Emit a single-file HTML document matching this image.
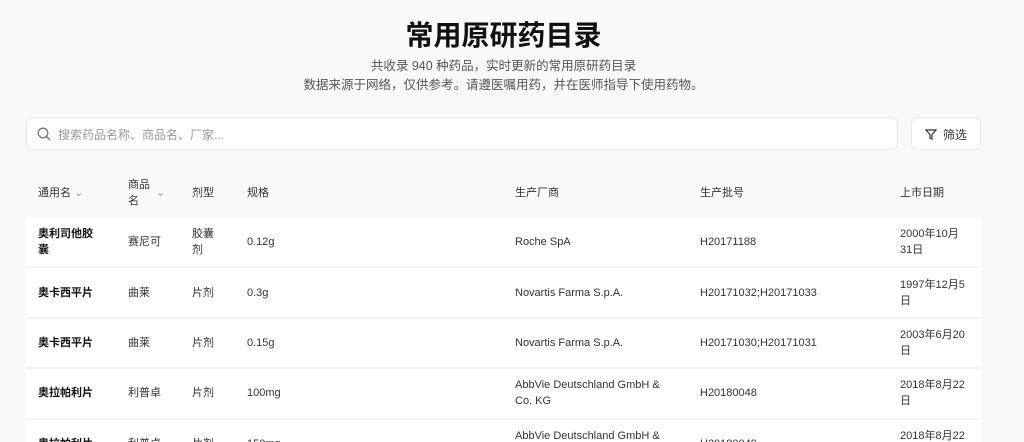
<!DOCTYPE html>
<html><head><meta charset="utf-8"><style>
*{margin:0;padding:0;box-sizing:border-box}
html,body{width:1024px;height:442px;overflow:hidden}
body{background:#f8f9fb;font-family:"Liberation Sans","Noto Sans CJK SC",sans-serif;color:#222;position:relative}
h1{position:absolute;top:14px;left:0;width:1007px;text-align:center;font-size:28px;font-weight:700;color:#111;letter-spacing:0px}
.sub{position:absolute;left:0;width:1007px;text-align:center;font-size:12.5px;color:#555}
.search{position:absolute;left:26px;top:117px;width:872px;height:33px;background:#fff;border:1px solid #e6e8ec;border-radius:6px}
.search span{position:absolute;left:31px;top:8px;font-size:12px;color:#999}
.filter{position:absolute;left:911px;top:117px;width:70px;height:33px;background:#fff;border:1px solid #e6e8ec;border-radius:6px;font-size:12px;color:#333}
.card{position:absolute;left:26px;top:167px;width:955px;height:275px;background:#fff;border-radius:6px 6px 0 0;overflow:hidden}
.hdr{position:absolute;left:0;top:0;width:100%;height:50px;background:#f8f9fb}
.c{position:absolute;font-size:11px;line-height:16px;color:#333}
.line{position:absolute;left:0;width:100%;height:2px;background:#f1f2f4}
.b{font-weight:700;color:#111}
</style></head><body>
<h1>常用原研药目录</h1>
<div class="sub" style="top:55px">共收录 940 种药品，实时更新的常用原研药目录</div>
<div class="sub" style="top:74px">数据来源于网络，仅供参考。请遵医嘱用药，并在医师指导下使用药物。</div>
<div class="search"><svg style="position:absolute;left:10px;top:9px" width="14" height="14" viewBox="0 0 14 14" fill="none" stroke="#777" stroke-width="1.3"><circle cx="6" cy="6" r="4.8"/><path d="M9.5 9.5L13 13"/></svg><span>搜索药品名称、商品名、厂家...</span></div>
<div class="filter"><svg style="position:absolute;left:13px;top:11px" width="12" height="11" viewBox="0 0 12 11" fill="none" stroke="#333" stroke-width="1.2"><path d="M1 1h10L7 5.5V10L5 9V5.5Z"/></svg><span style="position:absolute;left:31px;top:8px">筛选</span></div>
<div class="card">
<div class="hdr"></div>
<div class="c" style="left:12px;top:18px">通用名 <span style="color:#999">⌄</span></div>
<div class="c" style="left:102px;top:10px">商品<br>名</div><div class="c" style="left:130px;top:18px;color:#999">⌄</div>
<div class="c" style="left:166px;top:18px">剂型</div>
<div class="c" style="left:221px;top:18px">规格</div>
<div class="c" style="left:489px;top:18px">生产厂商</div>
<div class="c" style="left:674px;top:18px">生产批号</div>
<div class="c" style="left:874px;top:18px">上市日期</div>

<div class="c b" style="left:12px;top:59px">奥利司他胶<br>囊</div><div class="c" style="left:102px;top:67px">赛尼可</div><div class="c" style="left:166px;top:59px">胶囊<br>剂</div><div class="c" style="left:221px;top:67px">0.12g</div><div class="c" style="left:489px;top:67px">Roche SpA</div><div class="c" style="left:674px;top:67px">H20171188</div><div class="c" style="left:874px;top:59px">2000年10月<br>31日</div>
<div class="line" style="top:99px"></div>
<div class="c b" style="left:12px;top:118px">奥卡西平片</div><div class="c" style="left:102px;top:118px">曲莱</div><div class="c" style="left:166px;top:118px">片剂</div><div class="c" style="left:221px;top:118px">0.3g</div><div class="c" style="left:489px;top:118px">Novartis Farma S.p.A.</div><div class="c" style="left:674px;top:118px">H20171032;H20171033</div><div class="c" style="left:874px;top:110px">1997年12月5<br>日</div>
<div class="line" style="top:150px"></div>
<div class="c b" style="left:12px;top:168px">奥卡西平片</div><div class="c" style="left:102px;top:168px">曲莱</div><div class="c" style="left:166px;top:168px">片剂</div><div class="c" style="left:221px;top:168px">0.15g</div><div class="c" style="left:489px;top:168px">Novartis Farma S.p.A.</div><div class="c" style="left:674px;top:168px">H20171030;H20171031</div><div class="c" style="left:874px;top:160px">2003年6月20<br>日</div>
<div class="line" style="top:200px"></div>
<div class="c b" style="left:12px;top:218px">奥拉帕利片</div><div class="c" style="left:102px;top:218px">利普卓</div><div class="c" style="left:166px;top:218px">片剂</div><div class="c" style="left:221px;top:218px">100mg</div><div class="c" style="left:489px;top:210px">AbbVie Deutschland GmbH &amp;<br>Co. KG</div><div class="c" style="left:674px;top:218px">H20180048</div><div class="c" style="left:874px;top:210px">2018年8月22<br>日</div>
<div class="line" style="top:251px"></div>
<div class="c b" style="left:12px;top:269px">奥拉帕利片</div><div class="c" style="left:102px;top:269px">利普卓</div><div class="c" style="left:166px;top:269px">片剂</div><div class="c" style="left:221px;top:269px">150mg</div><div class="c" style="left:489px;top:261px">AbbVie Deutschland GmbH &amp;<br>Co. KG</div><div class="c" style="left:674px;top:269px">H20180049</div><div class="c" style="left:874px;top:261px">2018年8月22<br>日</div>
</div>
</body></html>
